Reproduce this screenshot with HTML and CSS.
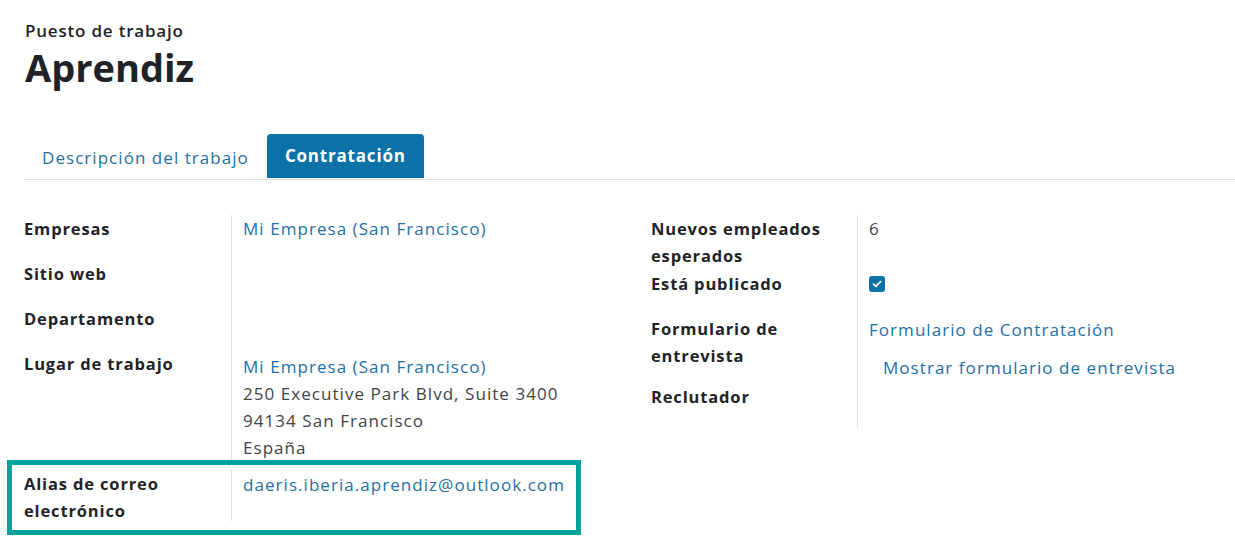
FILE: index.html
```html
<!DOCTYPE html>
<html lang="es">
<head>
<meta charset="utf-8">
<link rel="stylesheet" href="styles.css">
</head>
<body>
<div class="sheet">
  <div class="title-block">
    <div class="subtitle">Puesto de trabajo</div>
    <h1 class="title">Aprendiz</h1>
  </div>
  <div class="tabs">
    <div class="tab">Descripción del trabajo</div>
    <div class="tab active">Contratación</div>
  </div>
  <div class="groups">
    <div class="group left">
      <div class="row r-emp"><div class="label">Empresas</div><div class="value"><span class="link">Mi Empresa (San Francisco)</span></div></div>
      <div class="row r-std"><div class="label">Sitio web</div><div class="value"></div></div>
      <div class="row r-std"><div class="label">Departamento</div><div class="value"></div></div>
      <div class="row r-lugar"><div class="label">Lugar de trabajo</div><div class="value"><span class="link">Mi Empresa (San Francisco)</span><br>250 Executive Park Blvd, Suite 3400<br>94134 San Francisco<br>España</div></div>
      <div class="highlight">
        <div class="row r-alias"><div class="label">Alias de correo<br>electrónico</div><div class="value"><span class="link">daeris.iberia.aprendiz@outlook.com</span></div></div>
      </div>
    </div>
    <div class="group right">
      <div class="row r-top"><div class="label">Nuevos empleados<br>esperados</div><div class="value">6</div></div>
      <div class="row r-std"><div class="label">Está publicado</div><div class="value"><span class="checkbox"><svg width="10" height="8" viewBox="0 0 10 8"><path d="M1.5 4.2 L3.8 6.3 L8.5 1.6" fill="none" stroke="#fff" stroke-width="1.8" stroke-linecap="round" stroke-linejoin="round"/></svg></span></div></div>
      <div class="row r-form"><div class="label">Formulario de<br>entrevista</div><div class="value"><span class="link">Formulario de Contratación</span><div class="sub-link link">Mostrar formulario de entrevista</div></div></div>
      <div class="row r-std"><div class="label">Reclutador</div><div class="value"></div></div>
    </div>
  </div>
</div>
</body>
</html>
```
FILE: styles.css
```css
* { box-sizing: border-box; }
html, body { margin: 0; padding: 0; background: #fff; }
body {
  font-family: "Open Sans", "Liberation Sans", sans-serif;
  color: #3f4348;
  font-size: 17px;
  letter-spacing: 1.05px;
  line-height: 27px;
}
.sheet {
  padding: 18px 0 0 24px;
}
.title-block { padding-left: 1px; }
.subtitle {
  font-size: 17px;
  font-weight: 600;
  letter-spacing: 0.8px;
  color: #1f2328;
  line-height: 26px;
}
.title {
  margin: 0;
  font-size: 38px;
  font-weight: 700;
  letter-spacing: 0;
  color: #1f2328;
  line-height: 46px;
}
.tabs {
  display: flex;
  margin-top: 44px;
  border-bottom: 1px solid #dee2e6;
  height: 46px;
}
.tab {
  padding: 0 18px;
  height: 44px;
  display: flex;
  align-items: center;
  color: #1f6fa3;
  padding-top: 2px;
}
.tab.active {
  background: #0b72a8;
  color: #fff;
  font-weight: 700;
  letter-spacing: 0.8px;
  border-radius: 4px 4px 0 0;
  padding-top: 0;
  padding-bottom: 2px;
}
.groups {
  display: grid;
  grid-template-columns: 627px 1fr;
  margin-top: 35px;
}
.group { display: flex; flex-direction: column; }
.row {
  display: grid;
  grid-template-columns: 207px 1fr;
}
.right .row { grid-template-columns: 206px 1fr; }
.label {
  font-weight: 700;
  font-size: 16.5px;
  letter-spacing: 0.85px;
  color: #1f2328;
}
.value {
  border-left: 1px solid #dee2e6;
  padding-left: 11px;
}
.link { color: #1f6fa3; }
.r-emp .label, .r-emp .value, .r-std .label, .r-std .value { padding-bottom: 18px; }
.r-top .label { padding-bottom: 1px; }
.r-lugar .value { padding-top: 3px; }
.r-alias { align-items: start; }
.r-alias .value { padding-top: 1px; height: 51px; }
.r-form .value { padding-top: 1px; padding-bottom: 2px; }
.sub-link { margin-top: 11px; padding-left: 14px; }
.highlight {
  margin-left: -17px;
  width: 574px;
  border: 5px solid #00a39c;
  padding: 5px 0 6px 12px;
  margin-top: -1px;
}
.checkbox {
  display: inline-flex;
  align-items: center;
  justify-content: center;
  width: 16px;
  height: 16px;
  background: #0b72a8;
  border-radius: 3px;
  vertical-align: 2px;
}
```
